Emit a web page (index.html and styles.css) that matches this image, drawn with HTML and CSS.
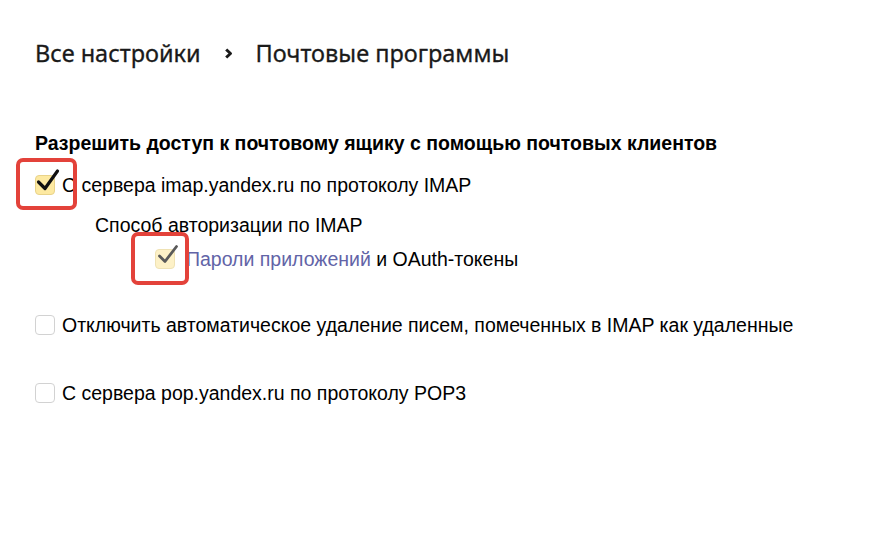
FILE: index.html
```html
<!DOCTYPE html>
<html lang="ru">
<head>
    <meta charset="UTF-8">
    <title>Почтовые программы</title>
    <link rel="stylesheet" href="styles.css">
</head>
<body>
    <div class="page">
        <div class="breadcrumbs">
            <span class="crumb">Все настройки</span>
            <svg class="crumb-sep" width="9" height="11" viewBox="0 0 9 11">
                <path d="M2.2 1.5 L6.5 5.5 L2.2 9.5" fill="none" stroke="#1a1a1a" stroke-width="3" stroke-linejoin="round"/>
            </svg>
            <span class="crumb">Почтовые программы</span>
        </div>

        <div class="section">
            <div class="section-title">Разрешить доступ к почтовому ящику с помощью почтовых клиентов</div>

            <label class="option">
                <span class="checkbox checked">
                    <svg class="tick" width="26" height="26" viewBox="0 0 26 26">
                        <path d="M3.5 14 L10 20.5 L22.5 3" fill="none" stroke="#111" stroke-width="3.2" stroke-linecap="round" stroke-linejoin="round"/>
                    </svg>
                    <span class="highlight hl-main"></span>
                </span>
                <span class="option-text">С сервера imap.yandex.ru по протоколу IMAP</span>
            </label>

            <div class="sub-title">Способ авторизации по IMAP</div>

            <label class="option sub-option">
                <span class="checkbox checked disabled">
                    <svg class="tick" width="26" height="26" viewBox="0 0 26 26">
                        <path d="M4.5 14 L10 19.5 L21.5 4.5" fill="none" stroke="#5a5a5a" stroke-width="2.8" stroke-linecap="round" stroke-linejoin="round"/>
                    </svg>
                    <span class="highlight hl-sub"></span>
                </span>
                <span class="option-text"><a href="#" class="link">Пароли приложений</a> и OAuth-токены</span>
            </label>

            <label class="option option-gap">
                <span class="checkbox"></span>
                <span class="option-text">Отключить автоматическое удаление писем, помеченных в IMAP как удаленные</span>
            </label>

            <label class="option option-pop">
                <span class="checkbox"></span>
                <span class="option-text">С сервера pop.yandex.ru по протоколу POP3</span>
            </label>
        </div>
    </div>
</body>
</html>
```

FILE: styles.css
```css
body {
    margin: 0;
    background-color: #fff;
    color: #000;
    font-family: "Liberation Sans", Arial, sans-serif;
}
.page {
    padding: 38px 35px;
}
.breadcrumbs {
    display: flex;
    align-items: center;
    height: 30px;
    font-family: "Noto Sans", "Open Sans", sans-serif;
    font-size: 23.5px;
    color: #1a1a1a;
    -webkit-text-stroke: 0.3px #1a1a1a;
}
.crumb-sep {
    margin: 0 23px 0 23px;
}
.section {
    margin-top: 64px;
}
.section-title {
    font-weight: bold;
    font-size: 19.5px;
    line-height: 22px;
    margin-bottom: 20px;
}
.option {
    display: flex;
    align-items: center;
    font-size: 19.5px;
    line-height: 22px;
    cursor: pointer;
}
.checkbox {
    position: relative;
    flex: none;
    width: 18px;
    height: 18px;
    border: 1px solid #d2d2d2;
    border-radius: 4px;
    margin-right: 7px;
    background-color: #fff;
}
.checkbox.checked {
    background-color: #fde9a1;
    border-color: #e9d38a;
}
.checkbox.disabled {
    background-color: #fdf1c7;
    border-color: #efe2b4;
}
.tick {
    position: absolute;
    left: -1px;
    top: -8px;
}
.highlight {
    position: absolute;
    border: 4px solid #e3423a;
    border-radius: 7px;
    box-sizing: border-box;
}
.hl-main {
    left: -20px;
    top: -18px;
    width: 61px;
    height: 52px;
}
.hl-sub {
    left: -25px;
    top: -18px;
    width: 58px;
    height: 53px;
}
.sub-title {
    font-size: 19.5px;
    line-height: 22px;
    margin: 18px 0 0 60px;
}
.sub-option {
    margin: 12px 0 0 120px;
}
.sub-option .checkbox {
    margin-right: 11px;
}
.link {
    color: #6264a7;
    text-decoration: none;
}
.option-gap {
    margin-top: 44px;
}
.option-pop {
    margin-top: 46px;
}
```
